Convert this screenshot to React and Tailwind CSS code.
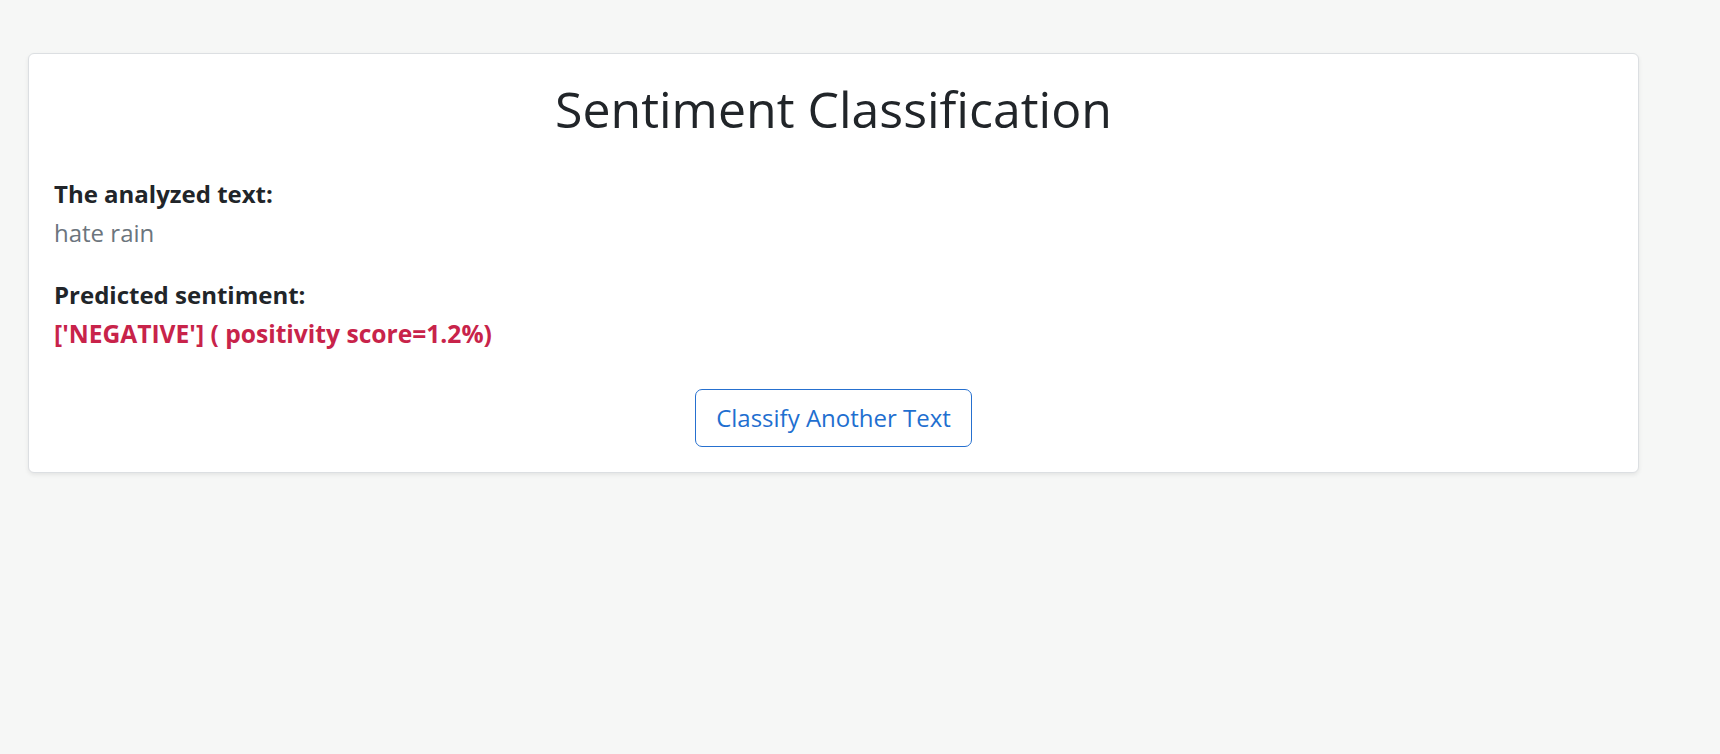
export default function App() {
  return (
    <div className="min-h-screen bg-[#f6f7f6] pt-[53px] pl-[28px] pr-[81px] font-['Open_Sans',sans-serif]">
      <div className="rounded-[6px] border border-[#dcdfe2] bg-white shadow-[0_2px_4px_rgba(0,0,0,0.075)] px-[25px] pt-[25px] pb-[25px]">
        <h1 className="text-center text-[50px] leading-[60px] font-normal text-[#212529]">
          Sentiment Classification
        </h1>
        <div className="mt-[40px] text-[24px] leading-[30px] font-bold text-[#212529]">
          The analyzed text:
        </div>
        <p className="mt-[9px] text-[24px] leading-[30px] text-[#6c757d]">hate rain</p>
        <div className="mt-[32px] text-[24px] leading-[30px] font-bold text-[#212529]">
          Predicted sentiment:
        </div>
        <p className="mt-[9px] text-[24.6px] leading-[30px] font-bold text-[#c8234a]">
          ['NEGATIVE'] ( positivity score=1.2%)
        </p>
        <div className="mt-[40px] flex justify-center">
          <button className="h-[58px] rounded-[7px] border border-[#2670cf] px-[20px] text-[24px] leading-[36px] text-[#1f6fd0] bg-white">
            Classify Another Text
          </button>
        </div>
      </div>
    </div>
  );
}
